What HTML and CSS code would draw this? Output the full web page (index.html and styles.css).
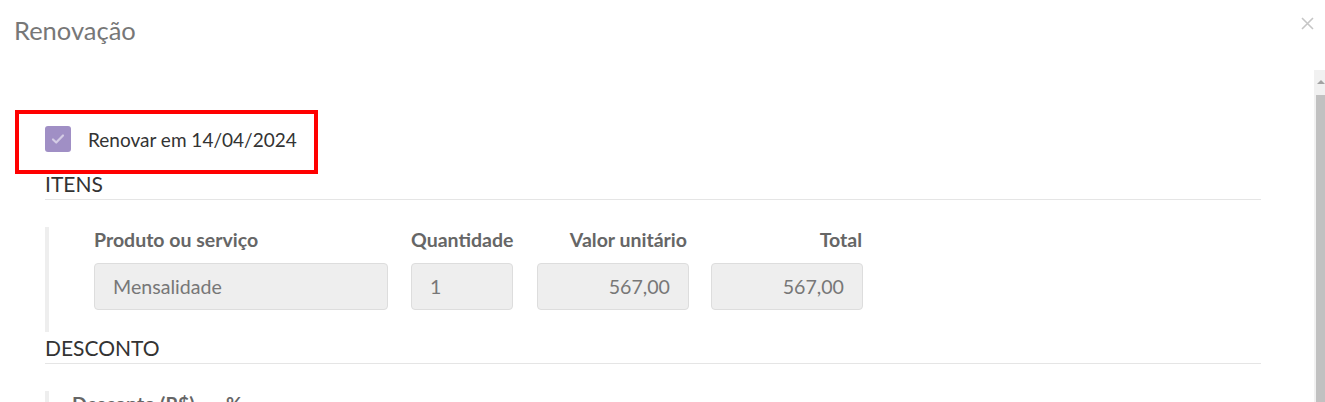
FILE: index.html
```html
<!doctype html>
<html lang="pt-BR">

	<head>
		<meta charset="UTF-8">
		<title>Renovação</title>
		<link rel="stylesheet" href="styles.css">
	</head>

	<body>
		<div class="modal">
			<div class="modal-header">
				<h4 class="modal-title">Renovação</h4>
				<button type="button" class="close" aria-label="Fechar">
					<svg width="13" height="13" viewBox="0 0 13 13"><path d="M1 1l11 11M12 1L1 12" stroke="#c6c6c6" stroke-width="1.6"/></svg>
				</button>
			</div>
			<div class="modal-body">
				<div class="mark"></div>
				<label class="renew">
					<span class="check">
						<svg width="14" height="12" viewBox="0 0 14 12"><path d="M2 6.5l3.2 3L12 2.5" fill="none" stroke="#fff" stroke-opacity=".55" stroke-width="2.2" stroke-linecap="round" stroke-linejoin="round"/></svg>
					</span>
					Renovar em 14/04/2024
				</label>

				<h5 class="section">ITENS</h5>
				<div class="block">
					<div class="items">
						<div class="field f-prod">
							<label>Produto ou serviço</label>
							<div class="input">Mensalidade</div>
						</div>
						<div class="field f-qtd">
							<label>Quantidade</label>
							<div class="input">1</div>
						</div>
						<div class="field f-val num">
							<label>Valor unitário</label>
							<div class="input">567,00</div>
						</div>
						<div class="field f-tot num">
							<label>Total</label>
							<div class="input">567,00</div>
						</div>
					</div>
				</div>

				<h5 class="section">DESCONTO</h5>
				<div class="block block-desc">
					<div class="items">
						<div class="field f-desc">
							<label>Desconto (R$)</label>
							<div class="input"></div>
						</div>
						<div class="field f-pct">
							<label>%</label>
							<div class="input"></div>
						</div>
					</div>
				</div>
			</div>
			<!-- barra de rolagem do corpo do modal -->
			<div class="scrollbar">
				<span class="scroll-up"></span>
				<span class="scroll-thumb"></span>
			</div>
		</div>
	</body>

</html>
```

FILE: styles.css
```css
html,
body {
	margin: 0;
	padding: 0;
	background: #ffffff;
	font-family: Lato, "Open Sans", sans-serif;
}

* {
	box-sizing: border-box;
}

.modal {
	position: relative;
	height: 402px;
	display: flex;
	flex-direction: column;
	overflow: hidden;
}

.modal-header {
	height: 70px;
	flex: none;
	display: flex;
	justify-content: space-between;
	align-items: flex-start;
	padding: 12px 11px 0 14px;
}

.modal-title {
	margin: 0;
	font-size: 25.5px;
	font-weight: normal;
	line-height: 36px;
	color: #777777;
}

.close {
	border: 0;
	background: none;
	padding: 0;
	margin: 5px 0 0;
	line-height: 0;
	cursor: pointer;
}

.modal-body {
	position: relative;
	flex: 1;
	overflow: hidden;
	padding: 56px 64px 40px 45px;
}

.scrollbar {
	position: absolute;
	right: 0;
	top: 70px;
	bottom: 0;
	width: 11px;
	background: #f1f1f1;
}

.scroll-up {
	position: absolute;
	left: 3px;
	top: 10px;
	width: 0;
	height: 0;
	border-left: 4px solid transparent;
	border-right: 4px solid transparent;
	border-bottom: 4px solid #a3a3a3;
}

.scroll-thumb {
	position: absolute;
	left: 2px;
	right: 0;
	top: 25px;
	bottom: 0;
	background: #c1c1c1;
}

/* marca vermelha em volta do checkbox */
.mark {
	position: absolute;
	left: 15px;
	top: 40px;
	width: 303px;
	height: 64px;
	border: 4px solid #ff0000;
	pointer-events: none;
}

.renew {
	display: flex;
	align-items: center;
	gap: 17px;
	height: 26px;
	margin-bottom: 19px;
	font-size: 19px;
	color: #333333;
}

.check {
	width: 26px;
	height: 26px;
	border-radius: 3px;
	background: #a08fc5;
	display: flex;
	align-items: center;
	justify-content: center;
}

.section {
	margin: 0;
	padding-bottom: 3px;
	border-bottom: 1px solid #e5e5e5;
	font-size: 21px;
	font-weight: normal;
	line-height: 25px;
	color: #333333;
}

.block {
	margin: 27px 0 3px;
	border-left: 4px solid #eeeeee;
	padding: 2px 0 22px 45px;
}

.block-desc {
	padding-left: 23px;
}

.items {
	display: flex;
	align-items: flex-end;
}

.field label {
	display: block;
	font-size: 19.5px;
	font-weight: bold;
	line-height: 22px;
	color: #666666;
	margin-bottom: 12px;
	white-space: nowrap;
}

.input {
	height: 47px;
	border: 1px solid #dddddd;
	border-radius: 4px;
	background: #eeeeee;
	padding: 0 18px;
	font-size: 19.6px;
	line-height: 45px;
	color: #777777;
}

.num label {
	text-align: right;
	margin-right: 2px;
}

.f-tot label {
	margin-right: 1px;
}

.num .input {
	text-align: right;
}

.f-prod {
	width: 294px;
	margin-right: 23px;
}

.f-qtd {
	width: 102px;
	margin-right: 24px;
}

.f-val {
	width: 152px;
	margin-right: 22px;
}

.f-tot {
	width: 152px;
}

.f-desc {
	width: 133px;
	margin-right: 21px;
}

.f-pct {
	width: 80px;
}
```
